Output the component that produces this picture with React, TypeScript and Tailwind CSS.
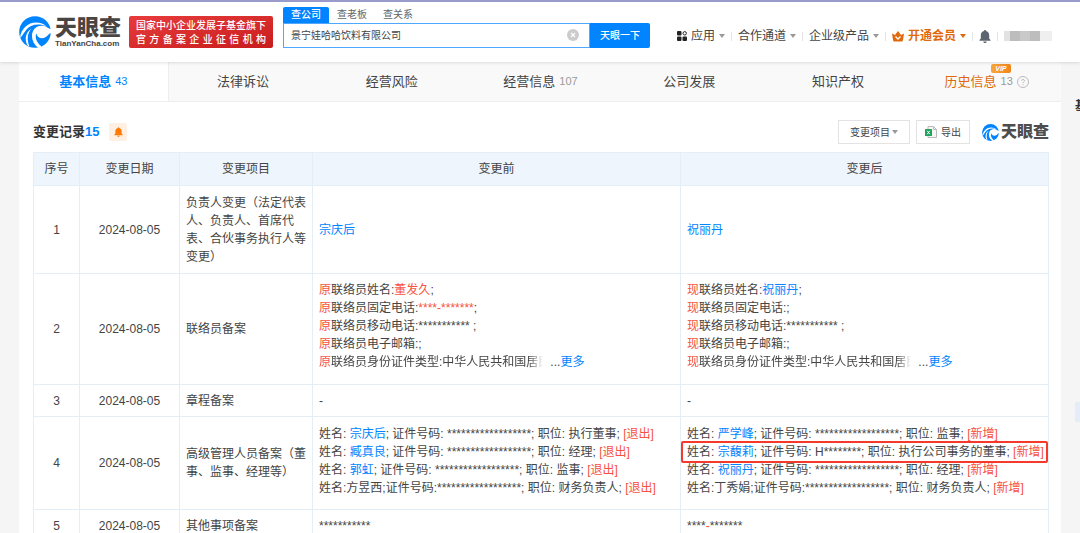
import type { ReactNode } from 'react';

const NAV_ITEMS = ['合作通道', '企业级产品'];

const TABS = [
  { label: '基本信息', count: 43, active: true },
  { label: '法律诉讼' },
  { label: '经营风险' },
  { label: '经营信息', count: 107 },
  { label: '公司发展' },
  { label: '知识产权' },
  { label: '历史信息', count: 13, vip: true },
];

const MASK = '******************';

function LogoMark({ className }: { className: string }) {
  return (
    <svg viewBox="0 0 32 32" className={className} aria-hidden="true">
      <circle cx="16" cy="16" r="15.8" fill="#0084ff" />
      <path d="M1 22C2 12.500 9 6.500 17 6.500C21.500 6.500 25 8 27.500 10.500C20 7 12 8.500 7.500 13.500C5 16.300 4 19.500 1 22Z" fill="#fff" />
      <path d="M14 15C16 10.500 21 8.800 25.500 10C28.500 11 29 13 32.500 13V17.500C29.500 16.500 30 20 25.500 21.800C21.500 23.200 18 21 17.500 17.500C15.500 21.500 17.500 27 22.500 30.500L19.500 32C13.500 27.500 11.500 20.500 14 15Z" fill="#fff" />
      <path d="M12.500 12.500C8.500 17 7.500 23.500 10.500 30.500L8.800 29.800C5 23.500 6.500 16.500 12.500 12.500Z" fill="#fff" />
    </svg>
  );
}

function Caret({ className = 'text-[#999]' }: { className?: string }) {
  return (
    <svg viewBox="0 0 6 4" className={`h-1 w-1.5 shrink-0 fill-current ${className}`} aria-hidden="true">
      <path d="M0 0h6L3 4z" />
    </svg>
  );
}

function Bell({ className }: { className: string }) {
  return (
    <svg viewBox="0 0 12 13" className={`fill-current ${className}`} aria-hidden="true">
      <path d="M6 0c.6 0 1 .4 1 1 2 .5 3.200 2.200 3.200 4.200v3.300l1.300 1.500v.8H.5V10l1.300-1.500V5.200C1.800 3.200 3 1.500 5 1c0-.6.4-1 1-1zM4.200 11.500h3.600C7.500 12.500 6.900 13 6 13s-1.500-.5-1.800-1.500z" />
    </svg>
  );
}

function Divider() {
  return <span className="h-[9px] w-px bg-[#e4e4e4]" />;
}

function Header() {
  return (
    <header className="relative z-10 flex h-[62px] items-center border-t-2 border-[#9a9acb] bg-white pl-[19px] shadow-[0_1px_3px_rgba(0,0,0,0.12)]">
      <a href="#" className="flex shrink-0 items-center gap-1" aria-label="天眼查">
        <LogoMark className="h-8 w-8" />
        <span className="flex flex-col items-start text-[#4a4442]">
          <span className="text-[22px] leading-[22px] font-black">天眼查</span>
          <span className="text-[8px] leading-[9px] font-bold">TianYanCha.com</span>
        </span>
      </a>

      <div className="ml-2 flex h-8 w-36 shrink-0 flex-col justify-center rounded-xs bg-linear-to-br from-[#e83c3c] to-[#c81a1c] px-[7px] font-['Noto_Sans_CJK_SC',sans-serif] text-[10px] leading-[14px] font-medium whitespace-nowrap text-white">
        <span>国家中小企业发展子基金旗下</span>
        <span className="[text-align-last:justify]">官 方 备 案 企 业 征 信 机 构</span>
      </div>

      <form className="mt-[-10px] ml-2.5 w-[367px] shrink-0 text-[10px]" onSubmit={(e) => e.preventDefault()}>
        <div className="flex h-4 text-[#666]">
          <button type="button" className="w-[46px] rounded-t-xs bg-[#0084ff] font-medium text-white">
            查公司
          </button>
          <button type="button" className="w-[46px]">
            查老板
          </button>
          <button type="button" className="w-[46px]">
            查关系
          </button>
        </div>
        <div className="flex h-[25px]">
          <label className="flex flex-1 items-center border border-[#4ea8ff] pr-2.5 pl-[7px]">
            <input
              type="text"
              aria-label="查公司"
              defaultValue="景宁娃哈哈饮料有限公司"
              className="min-w-0 flex-1 text-[#444] outline-none"
            />
            <svg viewBox="0 0 12 12" className="h-3 w-3" aria-hidden="true">
              <circle cx="6" cy="6" r="6" fill="#ccc" />
              <path d="M4 4l4 4M8 4l-4 4" stroke="#fff" strokeWidth="1.2" />
            </svg>
          </label>
          <button type="submit" className="w-[60px] rounded-r-xs bg-[#0084ff] font-medium text-white">
            天眼一下
          </button>
        </div>
      </form>

      <nav className="mt-2 ml-auto flex items-center gap-1.5 pr-7 text-[12px] whitespace-nowrap text-[#444]">
        <button type="button" className="flex items-center gap-1">
          <svg viewBox="0 0 10 10" className="h-2.5 w-2.5" aria-hidden="true">
            <g fill="#222">
              <rect width="4.500" height="4.500" rx="1" />
              <rect y="5.500" width="4.500" height="4.500" rx="1" />
              <rect x="5.500" y="5.500" width="4.500" height="4.500" rx="1" />
            </g>
            <circle cx="7.700" cy="2.300" r="1.700" fill="none" stroke="#222" />
          </svg>
          应用
          <Caret />
        </button>
        <Divider />
        {NAV_ITEMS.map((item) => (
          <div key={item} className="flex items-center gap-1.5">
            <button type="button" className="flex items-center gap-1">
              {item}
              <Caret />
            </button>
            <Divider />
          </div>
        ))}
        <button type="button" className="flex items-center gap-1 font-bold text-[#e0690c]">
          <svg viewBox="0 0 12 11" className="h-[11px] w-3" aria-hidden="true">
            <path d="M0 2.500l3 1.500L6 0l3 4 3-1.500-1 6.500c-.1.800-.6 1.500-1.500 1.500h-7C1.600 10.500 1.100 9.800 1 9z" fill="#e0690c" />
            <path d="M3.500 5.500L6 8l2.500-2.500" fill="none" stroke="#fff" strokeWidth="1.300" />
          </svg>
          开通会员
          <Caret className="text-[#e0690c]" />
        </button>
        <Divider />
        <button type="button" aria-label="消息">
          <Bell className="h-[13px] w-3 text-[#5d6670]" />
        </button>
        <Divider />
        <span className="flex h-2.5 w-12">
          <span className="w-1.5 bg-[#e2e2e2]" />
          <span className="w-2.5 bg-[#bdbdbd]" />
          <span className="w-2.5 bg-[#c9c9c9]" />
          <span className="w-2.5 bg-[#bdbdbd]" />
          <span className="flex-1 bg-[#efefef]" />
        </span>
      </nav>
    </header>
  );
}

function TabBar() {
  return (
    <nav className="flex h-10 border-b border-[#eee] bg-[#f9f9f9] text-[13px] text-[#444]">
      {TABS.map((tab) => (
        <a
          key={tab.label}
          href="#"
          className={`flex flex-1 items-center justify-center gap-1 whitespace-nowrap ${
            tab.active ? 'border-r border-[#eee] bg-white font-bold text-[#0084ff]' : ''
          } ${tab.vip ? 'text-[#e0690c]' : ''}`}
        >
          <span className="relative">
            {tab.label}
            {tab.vip && (
              <span className="absolute -top-2 -right-3.5 rounded-xs bg-linear-to-r from-[#f9a63c] to-[#f08519] px-1 text-[7px] leading-[9px] font-bold text-white italic">
                VIP
              </span>
            )}
          </span>
          {tab.count && (
            <span className={`text-[11px] font-normal ${tab.active ? 'text-[#0084ff]' : 'text-[#999]'}`}>
              {tab.count}
            </span>
          )}
          {tab.vip && (
            <svg viewBox="0 0 12 12" className="h-3 w-3" fill="none" stroke="#bbb" aria-hidden="true">
              <circle cx="6" cy="6" r="5.500" />
              <path d="M4.500 4.800C4.500 3 7.500 3 7.500 4.800 7.500 5.800 6 5.800 6 7.200M6 8.200v1" />
            </svg>
          )}
        </a>
      ))}
    </nav>
  );
}

function Name({ children }: { children: ReactNode }) {
  return (
    <a href="#" className="text-[#0084ff]">
      {children}
    </a>
  );
}

function Red({ children }: { children: ReactNode }) {
  return <span className="text-[#f55240]">{children}</span>;
}

function Contact({ tag, name, phone }: { tag: string; name: ReactNode; phone?: ReactNode }) {
  return (
    <div className="pt-0.5 pb-2 whitespace-nowrap">
      <p><Red>{tag}</Red>联络员姓名:{name};</p>
      <p><Red>{tag}</Red>联络员固定电话:{phone};</p>
      <p><Red>{tag}</Red>联络员移动电话:*********** ;</p>
      <p><Red>{tag}</Red>联络员电子邮箱:;</p>
      <p className="flex">
        <span className="[mask-image:linear-gradient(to_right,#000_91%,transparent_97%)]">
          <Red>{tag}</Red>联络员身份证件类型:中华人民共和国居民
        </span>
        <span>...</span>
        <button type="button" className="text-[#0084ff]">更多</button>
      </p>
    </div>
  );
}

type Person = { name: string; id?: string; post: string; plain?: boolean; marked?: boolean };

const LEAVING: Person[] = [
  { name: '宗庆后', post: '执行董事' },
  { name: '臧真良', post: '经理' },
  { name: '郭虹', post: '监事' },
  { name: '方昱西', post: '财务负责人', plain: true },
];

const JOINING: Person[] = [
  { name: '严学峰', post: '监事' },
  { name: '宗馥莉', id: 'H********', post: '执行公司事务的董事', marked: true },
  { name: '祝丽丹', post: '经理' },
  { name: '丁秀娟', post: '财务负责人', plain: true },
];

function People({ people, action }: { people: Person[]; action: string }) {
  return (
    <div className="pb-1 whitespace-nowrap">
      {people.map((p) => (
        <p key={p.name} className="relative">
          {p.plain ? (
            <>姓名:{p.name};证件号码:{MASK}</>
          ) : (
            <>姓名: <Name>{p.name}</Name>; 证件号码: {p.id ?? MASK}</>
          )}
          ; 职位: {p.post}; <Red>[{action}]</Red>
          {p.marked && (
            <span className="absolute -inset-x-1.5 -inset-y-0.5 rounded-xs border-2 border-[#f5392b]" />
          )}
        </p>
      ))}
    </div>
  );
}

const ROWS: { item: string; height: string; before: ReactNode; after: ReactNode }[] = [
  {
    item: '负责人变更（法定代表人、负责人、首席代表、合伙事务执行人等变更）',
    height: 'h-[88px]',
    before: <Name>宗庆后</Name>,
    after: <Name>祝丽丹</Name>,
  },
  {
    item: '联络员备案',
    height: 'h-[111px]',
    before: <Contact tag="原" name={<Red>董发久</Red>} phone={<Red>****-*******</Red>} />,
    after: <Contact tag="现" name={<Name>祝丽丹</Name>} />,
  },
  { item: '章程备案', height: 'h-8', before: '-', after: '-' },
  {
    item: '高级管理人员备案（董事、监事、经理等）',
    height: 'h-[93px]',
    before: <People people={LEAVING} action="退出" />,
    after: <People people={JOINING} action="新增" />,
  },
  { item: '其他事项备案', height: 'h-8', before: '***********', after: <>****<Red>-</Red>*******</> },
];

function ChangeRecords() {
  return (
    <section className="pr-3 pl-3.5">
      <div className="flex h-[50px] items-center pt-2.5">
        <h2 className="text-[13px] font-bold text-[#333]">
          变更记录<span className="text-[#0084ff]">15</span>
        </h2>
        <button type="button" aria-label="订阅变更" className="ml-2.5 flex h-[18px] w-[18px] items-center justify-center rounded-xs bg-[#fff0e3]">
          <Bell className="h-2.5 w-[9px] text-[#ff7a00]" />
        </button>
        <div className="ml-auto flex items-center gap-1.5 text-[10px] text-[#444]">
          <button type="button" className="flex h-6 w-[72px] items-center justify-center gap-0.5 border border-[#e3e3e3]">
            变更项目
            <Caret />
          </button>
          <button type="button" className="flex h-6 w-[54px] items-center justify-center gap-1 border border-[#e3e3e3]">
            <svg viewBox="0 0 12 12" className="h-3 w-3" aria-hidden="true">
              <path d="M3 .5h5.500l3 3v8H3z" fill="#f6f6f6" stroke="#bbb" />
              <path d="M8.500.5v3h3" fill="none" stroke="#bbb" />
              <rect y="3" width="7" height="7" rx=".5" fill="#1fa25a" />
              <path d="M2.200 4.800l2.600 3.400M4.800 4.800L2.200 8.200" stroke="#fff" />
            </svg>
            导出
          </button>
          <span className="ml-1.5 flex items-center gap-0.5 text-[16px] leading-5 font-black text-[#4d4d4d]">
            <LogoMark className="h-[17px] w-[17px]" />
            天眼查
          </span>
        </div>
      </div>

      <table className="w-full table-fixed border-collapse text-[12px] leading-[18px] text-[#444] [&_td]:border [&_td]:border-[#e4eef6] [&_td]:px-1.5 [&_th]:border [&_th]:border-[#e4eef6] [&_th]:font-normal">
        <colgroup>
          <col className="w-[46px]" />
          <col className="w-[100px]" />
          <col className="w-[133px]" />
          <col />
          <col />
        </colgroup>
        <thead>
          <tr className="h-[33px] bg-[#eff5fc]">
            <th>序号</th>
            <th>变更日期</th>
            <th>变更项目</th>
            <th>变更前</th>
            <th>变更后</th>
          </tr>
        </thead>
        <tbody>
          {ROWS.map((row, i) => (
            <tr key={row.item} className={row.height}>
              <td className="text-center">{i + 1}</td>
              <td className="text-center">2024-08-05</td>
              <td>{row.item}</td>
              <td>{row.before}</td>
              <td>{row.after}</td>
            </tr>
          ))}
        </tbody>
      </table>
    </section>
  );
}

export default function App() {
  return (
    <div className="h-screen overflow-hidden bg-[#f5f5f5] font-['Liberation_Sans','Noto_Sans_CJK_SC',sans-serif]">
      <Header />
      <div className="flex">
        <main className="ml-[19px] min-w-0 flex-1 bg-white">
          <TabBar />
          <ChangeRecords />
        </main>
        <aside className="w-[19px] overflow-hidden pt-[35px] pl-3.5 text-[12px] leading-[18px] font-bold whitespace-nowrap text-[#333]">
          基
          <div className="mt-[287px] h-5 bg-[#e3eefa]" />
        </aside>
      </div>
    </div>
  );
}
